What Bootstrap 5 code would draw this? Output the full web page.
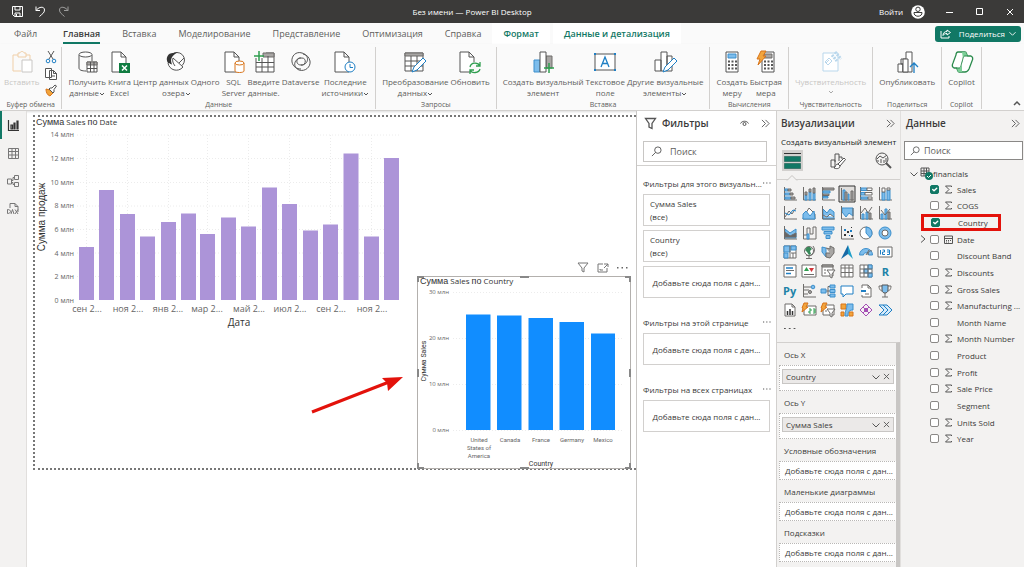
<!DOCTYPE html>
<html lang="ru">
<head>
<meta charset="utf-8">
<meta name="viewport" content="width=device-width, initial-scale=1">
<title>Без имени — Power BI Desktop</title>
<link rel="stylesheet" href="https://cdn.jsdelivr.net/npm/bootstrap@5.3.0/dist/css/bootstrap.min.css">
<style>
:root{--ink:#3b3a39;--mute:#605e5c;--pane:#f3f2f1;--line:#d2d0ce;--green:#117865;--red:#e3120b}
body{font:8px/11px "Open Sans","Noto Sans",sans-serif;color:var(--ink);background:#fff;overflow:hidden}
svg{display:block;flex:none;fill:none;stroke:#555;stroke-width:1;overflow:visible}
button,input{font:inherit;color:inherit}
.plain{border:0;background:none;padding:0;color:inherit}
.titlebar{height:23px;background:#3b3a39;color:#fff}
.titlebar svg{stroke:#fff}
.tabs{height:21px;background:#fafafa;padding-left:3px;font-size:9px}
.tabs .nav-link{padding:0 11px;height:21px;line-height:22px;color:var(--mute)}
.tabs .nav-link:first-child{margin-right:4px}
.tabs .active span{display:inline-block;height:21px;border-bottom:2px solid var(--green);color:var(--ink);font-weight:600}
.tabs .ctx{background:#fff;color:var(--green);font-weight:600;margin-right:3px}
.share{background:var(--green);color:#fff;border-radius:3px;height:16px;padding:0 5px;margin-right:3px}
.ribbon{height:67px;background:#fafafa;border-bottom:1px solid var(--line);box-shadow:0 1px 2px #0002}
.group{border-right:1px solid var(--line);margin-top:3px;padding:4px 6px 0;height:62px}
.group.clip{padding:4px 4px 0}
.group>div{gap:2px;height:49px}
.group>small{font-size:7px;line-height:9px;color:var(--mute);text-align:center;white-space:nowrap}
.tool{border:0;background:none;padding:0;color:var(--mute);text-align:center;white-space:nowrap;align-self:flex-start}
.tool svg{margin:0 auto 3px;width:22px;height:22px}
.off{color:#c8c6c4}
.rail{width:27px;background:var(--pane);border-right:1px solid #e1dfdd}
.rail button{height:28px}
.rail .on{border-left:2px solid var(--green);padding-right:2px}
.sheet{left:6px;top:4px;right:0;height:355px;border:2px dotted #777;border-right:0}
.visual{position:absolute}
.visual text{stroke:none;fill:#666;font-size:7px}
.visual .cap{fill:#333;font-size:8px}
.visual .rus{font-family:"Liberation Sans",Arial,sans-serif;font-size:9px}
.visual .big{font-size:9px}
.visual .tiny text{font-size:6px}
.mid{text-anchor:middle}.end{text-anchor:end}
.grid{stroke:#ececec;stroke-dasharray:1 2}
.filters{width:140px;border-left:1px solid #c8c6c4;background:#fff}
.viz{width:125px;background:var(--pane);border-left:1px solid var(--line);border-right:1px solid #e1dfdd}
.data{width:123px;background:var(--pane)}
h2{font-size:10px;line-height:14px;font-weight:600;margin:0}
.find{border:1px solid #8a8886;background:#fff;color:var(--mute)}
.find input{border:0;outline:0;background:none;width:1px;padding:0;font-size:9px}
.find input::placeholder{color:var(--mute);opacity:1}
.fcard{border:1px solid var(--line);height:32px;margin-bottom:4px;padding:0 6px;width:127px}
.fcard p,.fh p{margin:0;white-space:nowrap}
.fh{height:22px;width:128px}
.fh.next{margin-top:13px}
.tabico{width:21px;height:21px}
.tabico.on{background:#d2d0ce}
.icons{display:grid;grid-template-columns:repeat(6,1fr);grid-auto-rows:1fr;height:136px;padding:0 5px 0 3px}
.icons button{display:grid;place-items:center}
.icons svg{width:14px;height:14px;stroke:#6e6c6a}
.b{fill:#7dbdec;stroke:#3c8fcc}.bl{stroke:#1f7fc4}.g{fill:#a8a6a4;stroke:#6e6c6a}.w{fill:#fff}.o{fill:#f2a53c;stroke:#d8741a}.n{fill:none}
.well{border:1px dotted #b9b7b5;background:#fff;margin-left:2px;width:118px;height:19px;padding:0 0 0 5px}
.well.full{height:26px;padding:3px 2px 0}
.pill{background:#ebe9e8;border:1px solid #c8c6c4;height:15px;padding:0 3px}
.wl{height:22px;padding:0 0 0 7px}
.wells{overflow:hidden;border-right:4px solid #c8c6c4;border-top:1px solid var(--line)}
.tree{display:grid;grid-auto-rows:1fr;height:266px}
.field{padding-left:19px;gap:4px}
.field label{white-space:nowrap}
.field .form-check-input{width:9px;height:9px;margin:0 1px 0 0;border:1px solid #8a8886;border-radius:2px;flex:none;background-color:#fff}
.field .form-check-input:checked{background-color:var(--green);border-color:var(--green);background-size:9px}
.chev{width:6px;margin-right:0}
.sg{width:9px}
.field.hot{margin:0 23px 0 20px;padding-left:0;box-shadow:inset 0 0 0 3px var(--red);outline:1px solid var(--red);outline-offset:-1px}
</style>
</head>
<body class="d-flex flex-column vh-100">
<svg width="0" height="0" class="position-absolute" aria-hidden="true"><defs>
<symbol id="sum" viewBox="0 0 9 9"><path d="M7.500 2V1H1.500L5 4.500 1.500 8h6V7"/></symbol>
<symbol id="down" viewBox="0 0 8 8"><path d="M0.500 2.500 4 6l3.500-3.500"/></symbol>
<symbol id="more" viewBox="0 0 10 4"><path fill="#555" stroke="none" d="M0 1.500h1.500v1H0zm4 0h1.500v1H4zm4 0h1.500v1H8z"/></symbol>
<symbol id="dbl" viewBox="0 0 10 10"><path d="m1 1 4 4-4 4M5 1l4 4-4 4"/></symbol>
<symbol id="lens" viewBox="0 0 12 12"><circle cx="7.500" cy="4.500" r="3.500"/><path d="M5 7 1 11"/></symbol>
<symbol id="x" viewBox="0 0 8 8"><path d="m1 1 6 6M7 1 1 7"/></symbol>
<symbol id="dn" viewBox="0 0 6 6"><path d="m1 2 2 2 2-2"/></symbol>
<symbol id="page" viewBox="0 0 22 22"><path class="w" d="M4 1h9l5 5v15H4zM13 1v5h5"/></symbol>
</defs></svg>

<header class="titlebar d-flex align-items-center flex-shrink-0">
  <div class="d-flex align-items-center gap-2 ps-2">
    <button class="plain ms-1" aria-label="Сохранить"><svg width="11" height="11" viewBox="0 0 11 11" stroke-width=".9"><path d="M.5.500h10v10h-8l-2-2zM3 .5V4h5V.500M3 10.500V7h5v3.500M4.500 8v2"/></svg></button>
    <button class="plain ms-1" aria-label="Отменить"><svg width="11" height="11" viewBox="0 0 11 11"><path d="M1 .5V4.500h4M1 4.500C4 .5 9.500 0 9.500 4 9.500 7 7 8 4.500 10.500"/></svg></button>
    <button class="plain ms-1 opacity-50" aria-label="Повторить"><svg width="11" height="11" viewBox="0 0 11 11"><path d="M10 .5V4.500H6M10 4.500C7 .5 1.500 0 1.500 4 1.500 7 4 8 6.500 10.500"/></svg></button>
  </div>
  <div class="flex-fill text-center">Без имени — Power BI Desktop</div>
  <button class="plain" style="margin-left:4px">Войти</button>
  <svg class="ms-2" width="14" height="14" viewBox="0 0 14 14" style="margin-right:1px"><circle cx="7" cy="7" r="6.800" fill="#fff" stroke="none"/><circle cx="7" cy="4.300" r="2.200" stroke="#3b3a39"/><path stroke="#3b3a39" d="M3 7.500h8c.3 5-8.300 5-8 0z"/></svg>
  <div class="d-flex align-items-center" style="gap:23px;padding:0 10px 0 20px">
    <button class="plain" aria-label="Свернуть"><svg width="7" height="8"><path d="M0 4.500h7"/></svg></button>
    <button class="plain" aria-label="Развернуть"><svg width="7" height="7"><path d="M.5.500h6v6h-6z"/></svg></button>
    <button class="plain" aria-label="Закрыть"><svg width="8" height="8"><use href="#x"/></svg></button>
  </div>
</header>

<nav class="tabs d-flex align-items-center flex-shrink-0" aria-label="Лента">
  <a class="nav-link" href="#">Файл</a><a class="nav-link active" href="#"><span>Главная</span></a><a class="nav-link" href="#">Вставка</a><a class="nav-link" href="#">Моделирование</a><a class="nav-link" href="#">Представление</a><a class="nav-link" href="#">Оптимизация</a><a class="nav-link" href="#">Справка</a><a class="nav-link ctx" href="#">Формат</a><a class="nav-link ctx" href="#">Данные и детализация</a>
  <button class="plain share ms-auto d-flex align-items-center" style="font-size:8px"><svg class="me-1" width="11" height="10" viewBox="0 0 11 10" style="stroke:#fff"><path d="M1 2v7h8V7M7 1l3.500 2.500L7 6V4.500C5 4.500 4 5 3 6.500 3 4 4.500 2.500 7 2.500z"/></svg><span class="ms-1">Поделиться</span><svg class="ms-1" width="7" height="7" style="stroke:#fff"><use href="#down"/></svg></button>
</nav>

<section class="ribbon d-flex flex-shrink-0">
  <div class="group clip d-flex flex-column"><div class="d-flex">
    <button class="tool off"><svg viewBox="0 0 22 22" style="stroke:#f0cfa8"><path d="M7 4H2v16h8M15 4h4v5M7 2h2c0-2 4-2 4 0h2v4H7z"/><path class="w" style="stroke:#c8c6c4" d="M11 9h10v12H11z"/></svg>Вставить</button>
    <div class="d-flex flex-column justify-content-between align-items-center ps-1" style="height:45px">
      <button class="plain" aria-label="Вырезать"><svg width="12" height="12" viewBox="0 0 12 12"><path d="m3 0 5 8M9 0 4 8"/><circle class="bl" cx="3" cy="10" r="1.800"/><circle class="bl" cx="9" cy="10" r="1.800"/></svg></button>
      <button class="plain" aria-label="Копировать"><svg width="12" height="12" viewBox="0 0 12 12"><path class="w" d="M.5.500h6v9h-6zM4.500 2.500h4l3 3v6h-7zM8.500 2.500v3h3M6 8h4"/></svg></button>
      <button class="plain" aria-label="Формат по образцу"><svg width="12" height="12" viewBox="0 0 12 12"><path class="o" d="m1 5 4 1 3 3-3 3C2 11 1 8 1 5z"/><path class="w" d="M5 4h2l3-3 1.500 1L9 5.500V8L8 9 4 5z"/></svg></button>
    </div></div><small>Буфер обмена</small></div>
  <div class="group d-flex flex-column"><div class="d-flex">
    <button class="tool"><svg viewBox="0 0 22 22"><path d="M3 4v13c0 2 3 3 7 3M16 4v6"/><ellipse class="w" cx="9.500" cy="3.500" rx="6.500" ry="2.500"/><path class="w" d="M11 11h10v10H11z"/><path class="g" d="M11 11h10v3H11z"/><path d="M11 17.500h10M14.500 11v10M18 11v10"/></svg>Получить<br>данные<svg class="d-inline m-0" style="width:6px;height:6px"><use href="#dn"/></svg></button>
    <button class="tool"><svg viewBox="0 0 22 22"><use href="#page" width="22" height="22"/><path fill="#107c41" stroke="none" d="M11 12h11v10H11z"/><path stroke="#fff" stroke-width="1.500" d="m14 14.500 5 5M19 14.500l-5 5"/></svg>Книга<br>Excel</button>
    <button class="tool"><svg viewBox="0 0 22 22"><circle cx="12" cy="9" r="7.500"/><path fill="#333" stroke="none" d="M8 2C3 2 0 7 3 12l4 1C5 9 6 5 13 1z"/><path class="w" d="M3 12c1 7 10 10 15 4L8 7c-1 3 0 5 2 8M14 12l5-5"/></svg>Центр данных Одного<br>озера<svg class="d-inline m-0" style="width:6px;height:6px"><use href="#dn"/></svg></button>
    <button class="tool"><svg viewBox="0 0 22 22"><use href="#page" x="-2" width="22" height="22"/><g style="stroke:#d8741a"><path class="w" d="M12 12v8c0 2 9 2 9 0v-8"/><ellipse class="w" cx="16.500" cy="12" rx="4.500" ry="2"/></g></svg>SQL<br>Server</button>
    <button class="tool"><svg viewBox="0 0 22 22"><path class="w" d="M3 7v14h18V2h-8"/><path class="g" d="M10 2h11v4H10z"/><path d="M3 11.500h18M3 16h18M9 7v14M15 5v16"/><path stroke="#2f9e4f" stroke-width="1.500" d="M1 5h10M6 0v10"/></svg>Введите<br>данные.</button>
    <button class="tool"><svg viewBox="0 0 22 22"><path d="M11 7c-5-1-6 7 0 7 8 0 9-10 1-12C6 0 1 5 2 11c1 5 5 7 9 7M11 14c5 1 6-7 1-7-8 0-10 9-3 12 6 2 12-3 11-9-1-4-3-6-7-7"/></svg>Dataverse</button>
    <button class="tool"><svg viewBox="0 0 22 22"><use href="#page" x="-3" width="22" height="22"/><circle class="w" style="stroke:#1f7fc4" cx="16" cy="16" r="5"/><path class="bl" d="M16 13v3.500h3"/></svg>Последние<br>источники<svg class="d-inline m-0" style="width:6px;height:6px"><use href="#dn"/></svg></button>
  </div><small>Данные</small></div>
  <div class="group d-flex flex-column"><div class="d-flex">
    <button class="tool"><svg viewBox="0 0 22 22"><path class="w" d="M1 2h18v18H1z"/><path class="g" d="M1 2h18v3H1z"/><path d="M1 10h18M1 15h18M7 5v15M13 5v15"/><path class="w" style="stroke:#1f7fc4" d="m8 21 2-5L19 7l3 3-9 9z"/></svg>Преобразование<br>данных<svg class="d-inline m-0" style="width:6px;height:6px"><use href="#dn"/></svg></button>
    <button class="tool"><svg viewBox="0 0 22 22"><use href="#page" x="-3" width="22" height="22"/><circle fill="#fafafa" stroke="none" cx="16" cy="17" r="6"/><path stroke="#2f9e4f" stroke-width="1.300" d="M11 16c1-5 8-5 10-1M21 11v4h-4M21 18c-1 4-8 5-10 1M11 23v-4h4"/></svg>Обновить</button>
  </div><small>Запросы</small></div>
  <div class="group d-flex flex-column"><div class="d-flex">
    <button class="tool"><svg viewBox="0 0 22 22"><path class="b" d="M2 9h6v12H2z"/><path class="g" d="M14 5h6v12h-6z"/><path class="w" d="M8 1h6v20H8z"/><path stroke="#2f9e4f" stroke-width="1.500" d="M12 17h10M17 12v10"/></svg>Создать визуальный<br>элемент</button>
    <button class="tool"><svg viewBox="0 0 22 22"><path class="w" d="M1 3h20v16H1z"/><path class="bl" stroke-width="1.300" d="m7 16 4-10 4 10M8.500 12.500h5"/><path fill="#1f7fc4" stroke="none" d="M0 2h2v2H0zM20 2h2v2h-2zM0 18h2v2H0zM20 18h2v2h-2z"/></svg>Текстовое<br>поле</button>
    <button class="tool"><svg viewBox="0 0 22 22"><path class="w" d="M1 9h6v11H1zM7 1h6v19H7zM13 5h5v15h-5z"/><path class="w" style="stroke:#1f7fc4" d="m9 21 2-5 9-9 3 3-9 9z"/></svg>Другие визуальные<br>элементы<svg class="d-inline m-0" style="width:6px;height:6px"><use href="#dn"/></svg></button>
  </div><small>Вставка</small></div>
  <div class="group d-flex flex-column"><div class="d-flex">
    <button class="tool"><svg viewBox="0 0 22 22"><path class="w" d="M5 1h12v20H5z"/><path class="b" d="M7 3h8v4H7z"/><path stroke-width="2" stroke-dasharray="2 1.500" d="M7 10.500h9M7 14h9M7 17.500h9"/></svg>Создать<br>меру</button>
    <button class="tool"><svg viewBox="0 0 22 22"><path class="w" d="M7 1h12v20H7z"/><path class="g" d="M9 3h8v4H9z"/><path stroke-width="2" stroke-dasharray="2 1.500" d="M9 10.500h9M9 14h9M9 17.500h9"/><path class="o" d="M6 0h5L8 5h3L3 14l2-6H2z"/></svg>Быстрая<br>мера</button>
  </div><small>Вычисления</small></div>
  <div class="group d-flex flex-column"><div class="d-flex">
    <button class="tool off"><svg viewBox="0 0 22 22" style="stroke:#b9d7ec"><path class="w" d="M3 2h15v18H3z"/><path d="m8 14-3-3 4-4 3 3zM12 10 9 7M6 12l3-3"/><path stroke-width="3" stroke-dasharray="2 1" d="m12 4 5 6M15 1l6 7"/></svg>Чувствительность<br><svg style="width:6px;height:6px;margin-top:2px;stroke:#aaa"><use href="#dn"/></svg></button>
  </div><small>Чувствительность</small></div>
  <div class="group d-flex flex-column"><div class="d-flex">
    <button class="tool"><svg viewBox="0 0 22 22"><path class="w" d="M2 13h5v8H2zM5 8h5v13H7v-8H5zM10 1h6v20h-6z"/><path class="w" d="M7 8h5v13H7z"/><path class="bl" stroke-width="1.300" d="M18 22V12M14 16l4-4 4 4"/></svg>Опубликовать</button>
  </div><small>Поделиться</small></div>
  <div class="group d-flex flex-column"><div class="d-flex">
    <button class="tool"><svg viewBox="0 0 22 22" style="stroke:#2a8a4c"><path class="w" stroke-width="1.300" d="M7 1h7c2 0 1 3 3 4h3c2 1 2 3 1 5l-3 8c-1 2-2 3-4 3H8c-2 0-1-4-3-4H3c-2-1-2-3-1-5l3-8c0-2 1-3 2-3z"/><path fill="#7ccf97" stroke="none" d="M11 1h3c2 0 1 3 3 4h-3c-2 0-2 2-2 3zM11 21H8c-2 0-1-4-3-4h3c2 0 2-1 3-3z"/><path d="M17 5h-3c-2 0-2 3-3 6s-1 6-3 6H5"/></svg>Copilot</button>
  </div><small>Copilot</small></div>
  <button class="plain ms-auto align-self-end me-1 mb-1" aria-label="Свернуть ленту"><svg width="6" height="5"><path stroke-width="1.500" d="M0 4 3 1l3 3"/></svg></button>
</section>

<main class="d-flex flex-fill" style="min-height:0">
  <nav class="rail d-flex flex-column flex-shrink-0" aria-label="Представления">
    <button class="plain on d-flex justify-content-center align-items-center" aria-label="Отчёт"><svg width="11" height="11" viewBox="0 0 11 11" style="stroke:#333"><path stroke-width="1.200" d="M.5 0v10.500H11M3 5h1.500v4H3zM6 3h1v6H6zM9 1h1v8H9z"/></svg></button>
    <button class="plain d-flex justify-content-center align-items-center" aria-label="Таблица"><svg width="11" height="11" viewBox="0 0 11 11" style="stroke:#777"><path d="M.5.500h10v10H.5zM.5 3.500h10M.5 7h10M4 .5v10M7.500.500v10"/></svg></button>
    <button class="plain d-flex justify-content-center align-items-center" aria-label="Модель"><svg width="12" height="12" viewBox="0 0 12 12" style="stroke:#777"><path d="M.5 4h4v5h-4zM7.500.500h4v4h-4zM7.500 7.500h4v4h-4zM4.500 5.500H6v-3h1.500M4.500 7.500H6v2h1.500"/></svg></button>
    <button class="plain d-flex justify-content-center align-items-center" aria-label="DAX"><svg width="12" height="12" viewBox="0 0 12 12" style="stroke:#777"><path d="M3 5V.500h5l3 3V9M8 .5v3h3"/><path d="M.5 6.500v4c4 0 4-4 0-4zM4 11l1.500-4.500L7 11M8 6.500l3 4.500M11 6.500 8 11"/></svg></button>
  </nav>

  <section class="flex-fill position-relative overflow-hidden" aria-label="Холст отчёта">
    <div class="sheet position-absolute"></div>
    <svg class="visual" style="left:9px;top:5px" width="370" height="215" viewBox="36 116 370 215" role="img" aria-label="Сумма Sales по Date">
      <path class="grid" d="M77 135H400M77 158.500H400M77 182.500H400M77 206H400M77 229.500H400M77 253H400M77 276.500H400M86.500 135V300M127.500 135V300M168.500 135V300M207.500 135V300M248.500 135V300M289.500 135V300M330.500 135V300M371.500 135V300"/>
      <text class="cap" x="36" y="125"><tspan class="rus">Сумма</tspan> Sales <tspan class="rus">по</tspan> Date</text>
      <g class="end"><text x="74" y="137">14 млн</text><text x="74" y="161">12 млн</text><text x="74" y="185">10 млн</text><text x="74" y="208">8 млн</text><text x="74" y="232">6 млн</text><text x="74" y="256">4 млн</text><text x="74" y="279">2 млн</text><text x="74" y="303">0 млн</text></g>
      <path fill="#ac94d8" stroke="none" d="M79 247h15v53H79zM99 190h15v110H99zM120 214h15v86h-15zM140 236.500h15V300h-15zM161 222h15v78h-15zM181 213.500h15V300h-15zM200 234h15v66h-15zM221 217.500h15V300h-15zM241 226.500h15V300h-15zM262 187.500h15V300h-15zM282 204h15v96h-15zM303 230.500h15V300h-15zM323 224.500h15V300h-15zM343.500 153.500h15V300h-15zM364 236.500h15V300h-15zM384 158h15v142h-15z"/>
      <g class="mid"><text class="big" x="87" y="312">сен 2...</text><text class="big" x="128" y="312">ноя 2...</text><text class="big" x="168" y="312">янв 2...</text><text class="big" x="207" y="312">мар 2...</text><text class="big" x="249" y="312">май 2...</text><text class="big" x="290" y="312">июл 2...</text><text class="big" x="331" y="312">сен 2...</text><text class="big" x="372" y="312">ноя 2...</text>
      <text class="cap big" style="font-size:10px" x="239" y="326">Дата</text><text class="cap rus" style="font-size:10px" transform="translate(45 217) rotate(-90)">Сумма продаж</text></g>
    </svg>
    <svg class="visual" style="left:389px;top:149px" width="218" height="212" viewBox="416 260 218 212" role="img" aria-label="Сумма Sales по Country">
      <path stroke="#777" d="M578 263h10l-4 5v4l-2-1v-3zM603 264h-5v8h9v-4M604 264h4v3M608 264l-4 4M600 269v1h3"/><path fill="#666" stroke="none" d="M617 267h1.500v1.500H617zM621.500 267h1.500v1.500h-1.500zM626 267h1.500v1.500H626z"/>
      <path class="w" stroke="#b3b0ad" d="M417.500 276.500h213v192h-213z"/>
      <path stroke="#888" stroke-width="2" d="M418 282v-5h6M625 277h5v5M418 463v5h6M625 468h5v-5M520 277h9M520 468h9M418 369v8M630 369v8"/>
      <path class="grid" d="M453 292.500H624M453 338.500H624M453 384.500H624M453 430.500H624"/>
      <text class="cap" x="420" y="284"><tspan class="rus">Сумма</tspan> Sales <tspan class="rus">по</tspan> Country</text>
      <g class="end tiny"><text x="449" y="294">30 млн</text><text x="449" y="340">20 млн</text><text x="449" y="386">10 млн</text><text x="449" y="432">0 млн</text></g>
      <path fill="#118dff" stroke="none" d="M466 314.500h24.500V430H466zM497 315.500h24.500V430H497zM528.500 318H553v112h-24.500zM559.500 322H584v108h-24.500zM591 333.500h24V430h-24z"/>
      <g class="mid tiny" style="font-family:Roboto,sans-serif"><text x="479" y="442">United</text><text x="479" y="450">States of</text><text x="479" y="458">America</text><text x="510" y="442">Canada</text><text x="541" y="442">France</text><text x="572" y="442">Germany</text><text x="603" y="442">Mexico</text></g>
      <g class="mid" style="font-family:Roboto,sans-serif"><text style="fill:#333" x="541" y="466">Country</text><text style="fill:#333" transform="translate(426 361) rotate(-90)">Сумма Sales</text></g>
    </svg>
    <svg class="visual" style="left:284px;top:265px" width="92" height="38" viewBox="0 0 92 38" aria-hidden="true"><path stroke="#e3120b" stroke-width="3" d="M1 36 78 6"/><path fill="#e3120b" stroke="none" d="m92 1-21 1 5 5 1 8z"/></svg>
  </section>

  <aside class="filters flex-shrink-0" style="padding-left:6px">
    <div class="d-flex align-items-center" style="height:24px;padding-right:6px;margin-bottom:6px"><svg width="11" height="11" viewBox="0 0 11 11" style="margin:0 6px 0 2px"><path stroke-width="1.300" d="M.5.500h10L7 5.500v5L4 9V5.500z"/></svg><h2>Фильтры</h2>
      <button class="plain ms-auto" aria-label="Показать" style="margin-right:12px"><svg width="9" height="7" viewBox="0 0 9 7"><path d="M.5 3.500C2 .5 7 .5 8.500 3.500"/><circle cx="4.500" cy="4" r="1.500"/></svg></button><button class="plain" aria-label="Свернуть"><svg width="9" height="9"><use href="#dbl"/></svg></button></div>
    <label class="find d-flex align-items-center" style="height:21px;width:124px;padding-left:7px;gap:8px;border-color:#c8c6c4"><svg width="11" height="11"><use href="#lens"/></svg><input class="flex-fill" type="search" placeholder="Поиск" aria-label="Поиск фильтров"></label>
    <div style="border-top:1px solid #d2d0ce;margin:3px 0 6px -6px"></div>
    <div class="fh d-flex align-items-center"><p>Фильтры для этого визуальн...</p><svg class="ms-auto" width="8" height="4"><use href="#more"/></svg></div>
    <div class="fcard d-flex flex-column justify-content-evenly"><p>Сумма Sales</p><p>(все)</p></div>
    <div class="fcard d-flex flex-column justify-content-evenly"><p>Country</p><p>(все)</p></div>
    <div class="fcard d-flex align-items-center justify-content-center"><p>Добавьте сюда поля с дан...</p></div>
    <div class="fh next d-flex align-items-center"><p>Фильтры на этой странице</p><svg class="ms-auto" width="8" height="4"><use href="#more"/></svg></div>
    <div class="fcard d-flex align-items-center justify-content-center"><p>Добавьте сюда поля с дан...</p></div>
    <div class="fh next d-flex align-items-center"><p>Фильтры на всех страницах</p><svg class="ms-auto" width="8" height="4"><use href="#more"/></svg></div>
    <div class="fcard d-flex align-items-center justify-content-center"><p>Добавьте сюда поля с дан...</p></div>
  </aside>

  <aside class="viz flex-shrink-0 d-flex flex-column">
    <div class="d-flex align-items-center justify-content-between" style="height:24px;padding:0 5px 0 4px"><h2>Визуализации</h2><button class="plain" aria-label="Свернуть"><svg width="9" height="9"><use href="#dbl"/></svg></button></div>
    <div class="text-nowrap" style="padding:1px 4px 3px;color:#201f1e">Создать визуальный элемент</div>
    <div class="d-flex justify-content-between" style="padding:0 6px 0 5px;height:30px;border-bottom:1px solid #d2d0ce">
      <button class="plain tabico on d-grid" style="place-items:center" aria-label="Построение"><svg width="17" height="17" viewBox="0 0 17 17"><path stroke="#333" d="M0 1.500h17"/><path fill="#117865" stroke="#0b4f42" stroke-dasharray="1 1" d="M.5 4.500h16v5H.5zM.5 11.500h16v5H.5z"/></svg></button>
      <button class="plain tabico d-grid" style="place-items:center" aria-label="Формат"><svg width="16" height="16" viewBox="0 0 16 16"><path d="M5 14H1V7h4zM5 9V1h4v7M9 4h3v2"/><path class="w" d="M4 15c2-1 1-4 4-4l2 2c0 3-4 3-6 2zM8 11l6-6 1.500 1.500L10 13"/></svg></button>
      <button class="plain tabico d-grid" style="place-items:center" aria-label="Аналитика"><svg width="17" height="17" viewBox="0 0 17 17"><circle cx="7" cy="7" r="6"/><path d="M3 10V8M6 11V7M9 11V8M11 10V6M2 7l3-3 3 2 4-3"/><path stroke-width="2" d="m11 11 5 5"/></svg></button>
    </div>
    <svg style="margin:-5px 0 -1px 10px" width="10" height="6"><path fill="#f3f2f1" stroke="#c8c6c4" d="M0 5.500 5 .5l5 5"/></svg>
    <div class="icons" style="margin-top:4px">
      <button class="plain" aria-label="Линейчатая с накоплением"><svg viewBox="0 0 14 14"><path d="M1.500 0v13H14"/><path class="b" d="M2 2h3v2H2zM2 6h5v2H2zM2 10h6v2H2z"/><path class="g" d="M5 2h3v2H5zM7 6h3v2H7zM8 10h4v2H8z"/></svg></button>
      <button class="plain" aria-label="Гистограмма с накоплением"><svg viewBox="0 0 14 14"><path d="M1.500 0v13H14"/><path class="b" d="M3 8h2v5H3zM7 5h2v8H7zM11 6h2v7h-2z"/><path class="g" d="M3 5h2v3H3zM7 2h2v3H7zM11 1h2v5h-2z"/></svg></button>
      <button class="plain" aria-label="Линейчатая с группировкой"><svg viewBox="0 0 14 14"><path d="M1.500 0v13H14"/><path class="g" d="M2 1h11v2H2zM2 7h6v1.500H2z"/><path class="b" d="M2 4h7v2H2zM2 9.500h5V11H2z"/></svg></button>
      <button class="plain" aria-label="Гистограмма с группировкой"><svg viewBox="0 0 14 14"><path stroke="#333" fill="#e1dfdd" d="M-1 -1h16v16H-1z"/><path d="M1.500 1v12H14"/><path class="b" d="M3 3h2v10H3zM8 7h1v6H8z"/><path class="g" d="M5 5h2v8H5zM11 4h2v9h-2z"/></svg></button>
      <button class="plain" aria-label="Нормированная линейчатая"><svg viewBox="0 0 14 14"><path d="M1.500 0v13H14"/><path class="b" d="M2 1h6v2.500H2zM2 5.500h4V8H2zM2 10h7v2H2z"/><path class="w" d="M8 1h5v2.500H8zM6 5.500h7V8H6zM9 10h4v2H9z"/></svg></button>
      <button class="plain" aria-label="Нормированная гистограмма"><svg viewBox="0 0 14 14"><path d="M1.500 0v13H14"/><path class="b" d="M4 5h3v8H4zM9 3h3v10H9z"/><path class="w" d="M4 1h3v4H4zM9 1h3v2H9z"/></svg></button>

      <button class="plain" aria-label="График"><svg viewBox="0 0 14 14"><path d="M1.500 0v13H14M2 11l4-6 3 3 4-6"/><path class="bl" d="m2 7 4 2 4-5 3 1"/></svg></button>
      <button class="plain" aria-label="Диаграмма с областями"><svg viewBox="0 0 14 14"><path class="w" d="m1 12 6-10 6 6v5H1z"/><path class="b" d="m1 8 3-3 4 5 4-5 1 8H1z"/></svg></button>
      <button class="plain" aria-label="Области с накоплением"><svg viewBox="0 0 14 14"><path class="b" d="m2 3 4 4 3-4 4 3v7H2z"/><path d="M1.500 0v13H14"/><path class="w" d="m2 9 4 2 3-3 4 3"/></svg></button>
      <button class="plain" aria-label="Нормированные области"><svg viewBox="0 0 14 14"><path class="b" d="M2 2h11v8L9 7l-3 4-4-5z"/><path d="M1.500 0v13H14M13 2v11"/></svg></button>
      <button class="plain" aria-label="График и гистограмма"><svg viewBox="0 0 14 14"><path d="M1.500 0v13H14"/><path class="b" d="M3 8h2v5H3zM7 6h2v7H7z"/><path class="g" d="M10 7h2v6h-2z"/><path d="m2 7 4-5 3 5 4-6"/></svg></button>
      <button class="plain" aria-label="График и группы"><svg viewBox="0 0 14 14"><path d="M1.500 0v13H14"/><path class="b" d="M3 8h2v5H3zM7 3h2v10H7z"/><path class="g" d="M10 6h2v7h-2z"/><path d="m3 4 4 5 5-6"/></svg></button>

      <button class="plain" aria-label="Лента"><svg viewBox="0 0 14 14"><path class="b" d="m2 3 5 4 6-4v9H2z"/><path fill="#666" d="m2 6 5 4 6-3v4H2z"/><path d="M1.500 0v13H14"/></svg></button>
      <button class="plain" aria-label="Каскадная"><svg viewBox="0 0 14 14"><path d="M1.500 0v13H14V1h-3v7H8V2H5v7H2"/><path class="b" d="M5 8h2v5H5z"/></svg></button>
      <button class="plain" aria-label="Воронка"><svg viewBox="0 0 14 14"><path class="b" d="M1 1h12v3H1zM3 5.500h8V8H3zM5 9.500h4v3H5z"/></svg></button>
      <button class="plain" aria-label="Точечная"><svg viewBox="0 0 14 14"><path d="M1.500 0v13H14"/><path fill="#333" stroke="none" d="M4 8h2v2H4zM7 5h2v2H7zM11 9h2v2h-2zM11 1h1v1h-1z"/><path fill="#1f7fc4" stroke="none" d="M4 3h2v2H4zM9 9h1v1H9zM10 4h2v2h-2z"/></svg></button>
      <button class="plain" aria-label="Круговая"><svg viewBox="0 0 14 14"><circle class="w" cx="7" cy="7" r="6"/><path class="b" d="M7 7V1a6 6 0 0 1 4 10.500z"/></svg></button>
      <button class="plain" aria-label="Кольцевая"><svg viewBox="0 0 14 14"><circle class="b" cx="7" cy="7" r="6"/><circle class="w" cx="7" cy="7" r="3"/></svg></button>

      <button class="plain" aria-label="Дерево"><svg viewBox="0 0 14 14"><path class="w" d="M1 1h12v12H1zM8 8h5"/><path class="b" d="M1 1h6v6H1zM1 8h4v5H1zM8 1h5v4H8z"/><path d="M7 1v12M10 8v5"/></svg></button>
      <button class="plain" aria-label="Карта"><svg viewBox="0 0 14 14"><circle class="w" cx="7" cy="6" r="4.500"/><path fill="#39895a" stroke="none" d="M5 2h3l2 2-2 2 1 3-2 1-2-3-2-2z"/><path d="M11 1c4 5-1 12-7 9M7 11v2.500M4 13.500h6"/></svg></button>
      <button class="plain" aria-label="Картограмма"><svg viewBox="0 0 14 14"><path class="b" d="m1 2 4 1v9L1 7z"/><path class="g" d="m5 3 4 1V1l4 2v5l-4 5-4-1V8h4"/></svg></button>
      <button class="plain" aria-label="Azure Maps"><svg viewBox="0 0 14 14"><path fill="#1f9fc9" stroke="none" d="M8 0 13 14 8 9z"/><path fill="#176aa6" stroke="none" d="M8 0 1 14l7-5z"/></svg></button>
      <button class="plain" aria-label="Датчик"><svg viewBox="0 0 14 14"><path class="b" d="M.5 10a6.500 6.500 0 0 1 13 0h-4c0-3-5-3-5 0z"/><path d="m7 10 3-5M9 10c0-3 2-5 4-4"/></svg></button>
      <button class="plain" aria-label="Карточка"><svg viewBox="0 0 14 14"><path class="w" d="M0 2h14v10H0z"/><path class="bl" d="M2.500 5v4.500M4.500 5h2v2h-2v2.500H7M9 5h2.500v4.500H9M9 7h2.500"/></svg></button>

      <button class="plain" aria-label="Многострочная карточка"><svg viewBox="0 0 14 14"><path class="w" d="M1 1h12v12H1z"/><path stroke-width="1.500" class="bl" d="M3 4h7M3 9.500h5"/><path d="M3 6.500h8"/></svg></button>
      <button class="plain" aria-label="КПЭ"><svg viewBox="0 0 14 14"><path class="w" d="M0 1h14v12H0z"/><path fill="#2f9e4f" stroke="none" d="m2 7 2.500-4L7 7z"/><path fill="#d13438" stroke="none" d="M7 4h5L9.500 8z"/><path d="M2 10.500h10"/></svg></button>
      <button class="plain" aria-label="Срез"><svg viewBox="0 0 14 14"><path class="w" d="M1 1h11v11H1z"/><path class="g" d="M1 1h11v2H1z"/><path d="M3 6h2M3 9h2"/><path class="w" d="M6 6h8l-3 4v4l-2-1v-3z"/></svg></button>
      <button class="plain" aria-label="Таблица"><svg viewBox="0 0 14 14"><path class="w" d="M1 1h12v12H1z"/><path d="M1 4h12M1 8.500h12M5 1v12M9 1v12"/></svg></button>
      <button class="plain" aria-label="Матрица"><svg viewBox="0 0 14 14"><path class="w" d="M1 1h12v12H1z"/><path class="b" d="M5 5h4v4H5zM9 1h4v4H9zM9 9h4v4H9z"/><path d="M1 5h12M1 9h12M5 1v12M9 1v12"/></svg></button>
      <button class="plain fw-bold" style="color:#2083a8;font-size:11px">R</button>

      <button class="plain fw-bold" style="color:#2083a8;font-size:11px">Py</button>
      <button class="plain" aria-label="Ключевые факторы"><svg viewBox="0 0 14 14"><path d="M1.500 0v13H14M2 3h7M2 6h5M2 10h4"/><circle class="b" cx="11" cy="3" r="1.800"/><circle class="g" cx="8" cy="8" r="1.500"/></svg></button>
      <button class="plain" aria-label="Дерево декомпозиции"><svg viewBox="0 0 14 14"><path d="M4 7h5M7 2.500v9M7 2.500h2M7 11.500h2"/><path class="b" d="M0 5h5v4H0zM9 1h5v3H9zM9 5.500h5v3H9zM9 10h5v3H9z"/></svg></button>
      <button class="plain" aria-label="Вопросы и ответы"><svg viewBox="0 0 14 14"><path class="w" style="stroke:#1f7fc4" d="M1 2h12v8H6l-3 3v-3H1z"/></svg></button>
      <button class="plain" aria-label="Описание"><svg viewBox="0 0 14 14"><path class="w" d="M3 4V1h6l3 3v9H3v-2M9 1v3h3M6 10h4"/><path fill="#1f7fc4" stroke="none" d="M2 6h5v2H2z"/></svg></button>
      <button class="plain" aria-label="Цели"><svg viewBox="0 0 14 14"><path d="M4 2H1c0 4 2 5 4 5M10 2h3c0 4-2 5-4 5M7 9v4M4 13h6"/><path class="b" style="stroke:#555" d="M4 1h6v5c0 4-6 4-6 0z"/></svg></button>

      <button class="plain" aria-label="Отчёт с разбивкой"><svg viewBox="0 0 14 14"><path class="w" d="M2 1h7l3 3v9H2zM9 1v3h3"/><path stroke="#333" stroke-width="1.500" d="M4.500 12V8M7 12V6M9.500 12V8"/></svg></button>
      <button class="plain" aria-label="Новая карточка"><svg viewBox="0 0 14 14"><path class="w" d="M2 3h12v9H2z"/><path stroke="#2f9e4f" d="M7 6h2v2H7v2h2M11 6h2v4h-2M11 8h2"/><path class="o" d="M2 0h4L4 4h2L0 9l1-4H0z"/></svg></button>
      <button class="plain" aria-label="Новый срез"><svg viewBox="0 0 14 14"><path class="w" d="M2 2h11v10H2zM4 8h2"/><path class="w" d="M6 6h8l-3 4v4l-2-1v-3z"/><path class="o" d="M2 0h4L4 4h2L0 9l1-4H0z"/></svg></button>
      <button class="plain" aria-label="ArcGIS"><svg viewBox="0 0 14 14"><path class="o" d="M1 1h5v5H1zM9 9h4v4H9zM1 9h3v4H1z"/><path class="b" d="M7 1h6v6c-5 0-5 3-5 6H5c0-6 2-6 2-12z"/></svg></button>
      <button class="plain" aria-label="Power Apps"><svg viewBox="0 0 14 14" style="stroke:#a54fb5"><path d="m7 1 6 6-6 6-6-6zM4 4l6 6M10 4l-6 6M7 5l2 2-2 2-2-2z"/></svg></button>
      <button class="plain" aria-label="Power Automate"><svg viewBox="0 0 14 14" style="stroke:#1f7fc4"><path fill="#d5eafa" d="M1 2h8l5 5-5 5H1l5-5zM5 2l5 5-5 5"/></svg></button>
    </div>
    <button class="plain text-start" style="padding-left:7px;height:16px" aria-label="Ещё"><svg width="12" height="5"><use href="#more"/></svg></button>
    <div class="wells flex-fill" style="margin-top:6px;min-height:0">
      <div class="wl d-flex align-items-center">Ось X</div>
      <div class="well full"><div class="pill d-flex align-items-center"><span class="me-auto">Country</span><button class="plain" aria-label="Меню"><svg width="8" height="8"><use href="#down"/></svg></button><button class="plain" style="margin-left:3px" aria-label="Удалить"><svg width="7" height="7"><use href="#x"/></svg></button></div></div>
      <div class="wl d-flex align-items-center">Ось Y</div>
      <div class="well full"><div class="pill d-flex align-items-center"><span class="me-auto">Сумма Sales</span><button class="plain" aria-label="Меню"><svg width="8" height="8"><use href="#down"/></svg></button><button class="plain" style="margin-left:3px" aria-label="Удалить"><svg width="7" height="7"><use href="#x"/></svg></button></div></div>
      <div class="wl d-flex align-items-center">Условные обозначения</div>
      <div class="well d-flex align-items-center text-nowrap">Добавьте сюда поля с дан...</div>
      <div class="wl d-flex align-items-center">Маленькие диаграммы</div>
      <div class="well d-flex align-items-center text-nowrap">Добавьте сюда поля с дан...</div>
      <div class="wl d-flex align-items-center">Подсказки</div>
      <div class="well d-flex align-items-center text-nowrap">Добавьте сюда поля с дан...</div>
    </div>
  </aside>

  <aside class="data flex-shrink-0">
    <div class="d-flex align-items-center justify-content-between" style="height:24px;padding:0 4px 0 5px;margin-bottom:6px"><h2>Данные</h2><button class="plain" aria-label="Свернуть"><svg width="9" height="9"><use href="#dbl"/></svg></button></div>
    <label class="find d-flex align-items-center" style="height:19px;margin:0 1px 0 3px;padding-left:5px;gap:4px"><svg width="10" height="10"><use href="#lens"/></svg><input class="flex-fill" type="search" placeholder="Поиск" aria-label="Поиск полей"></label>
    <div class="d-flex align-items-center" style="height:15px;margin-top:6px;padding-left:9px"><svg width="8" height="8" style="margin-right:2px"><use href="#down"/></svg><svg width="13" height="13" viewBox="0 0 13 13"><path d="M1 1h8v8H1zM1 4h8M1 6.500h8M4 1v8M6.500 1v8"/><circle cx="9" cy="9" r="4" fill="#117865" stroke="none"/><path stroke="#fff" d="m7 9 1.500 1.500L11 8"/></svg>financials</div>
    <div class="tree">
      <div class="field d-flex align-items-center"><span class="chev"></span><input class="form-check-input" type="checkbox" id="f1" checked><svg class="sg" height="9"><use href="#sum"/></svg><label for="f1">Sales</label></div>
      <div class="field d-flex align-items-center"><span class="chev"></span><input class="form-check-input" type="checkbox" id="f2"><svg class="sg" height="9"><use href="#sum"/></svg><label for="f2">COGS</label></div>
      <div class="field hot d-flex align-items-center"><span class="chev"></span><input class="form-check-input" type="checkbox" id="f3" checked><span class="sg"></span><label for="f3">Country</label></div>
      <div class="field d-flex align-items-center"><svg class="chev" height="8" viewBox="0 0 6 8"><path d="m1 .5 4 3.500-4 3.500"/></svg><input class="form-check-input" type="checkbox" id="f4"><svg class="sg" height="9" viewBox="0 0 9 9"><path d="M.5 1h8v7.500h-8zM.5 3.500h8M2 5.500h1m1 0h1m1 0h1M2 7h1m1 0h1"/></svg><label for="f4">Date</label></div>
      <div class="field d-flex align-items-center"><span class="chev"></span><input class="form-check-input" type="checkbox" id="f5"><span class="sg"></span><label for="f5">Discount Band</label></div>
      <div class="field d-flex align-items-center"><span class="chev"></span><input class="form-check-input" type="checkbox" id="f6"><svg class="sg" height="9"><use href="#sum"/></svg><label for="f6">Discounts</label></div>
      <div class="field d-flex align-items-center"><span class="chev"></span><input class="form-check-input" type="checkbox" id="f7"><svg class="sg" height="9"><use href="#sum"/></svg><label for="f7">Gross Sales</label></div>
      <div class="field d-flex align-items-center"><span class="chev"></span><input class="form-check-input" type="checkbox" id="f8"><svg class="sg" height="9"><use href="#sum"/></svg><label for="f8">Manufacturing ...</label></div>
      <div class="field d-flex align-items-center"><span class="chev"></span><input class="form-check-input" type="checkbox" id="f9"><span class="sg"></span><label for="f9">Month Name</label></div>
      <div class="field d-flex align-items-center"><span class="chev"></span><input class="form-check-input" type="checkbox" id="f10"><svg class="sg" height="9"><use href="#sum"/></svg><label for="f10">Month Number</label></div>
      <div class="field d-flex align-items-center"><span class="chev"></span><input class="form-check-input" type="checkbox" id="f11"><span class="sg"></span><label for="f11">Product</label></div>
      <div class="field d-flex align-items-center"><span class="chev"></span><input class="form-check-input" type="checkbox" id="f12"><svg class="sg" height="9"><use href="#sum"/></svg><label for="f12">Profit</label></div>
      <div class="field d-flex align-items-center"><span class="chev"></span><input class="form-check-input" type="checkbox" id="f13"><svg class="sg" height="9"><use href="#sum"/></svg><label for="f13">Sale Price</label></div>
      <div class="field d-flex align-items-center"><span class="chev"></span><input class="form-check-input" type="checkbox" id="f14"><span class="sg"></span><label for="f14">Segment</label></div>
      <div class="field d-flex align-items-center"><span class="chev"></span><input class="form-check-input" type="checkbox" id="f15"><svg class="sg" height="9"><use href="#sum"/></svg><label for="f15">Units Sold</label></div>
      <div class="field d-flex align-items-center"><span class="chev"></span><input class="form-check-input" type="checkbox" id="f16"><svg class="sg" height="9"><use href="#sum"/></svg><label for="f16">Year</label></div>
    </div>
  </aside>
</main>
<script src="https://cdn.jsdelivr.net/npm/bootstrap@5.3.0/dist/js/bootstrap.bundle.min.js"></script>
</body>
</html>
